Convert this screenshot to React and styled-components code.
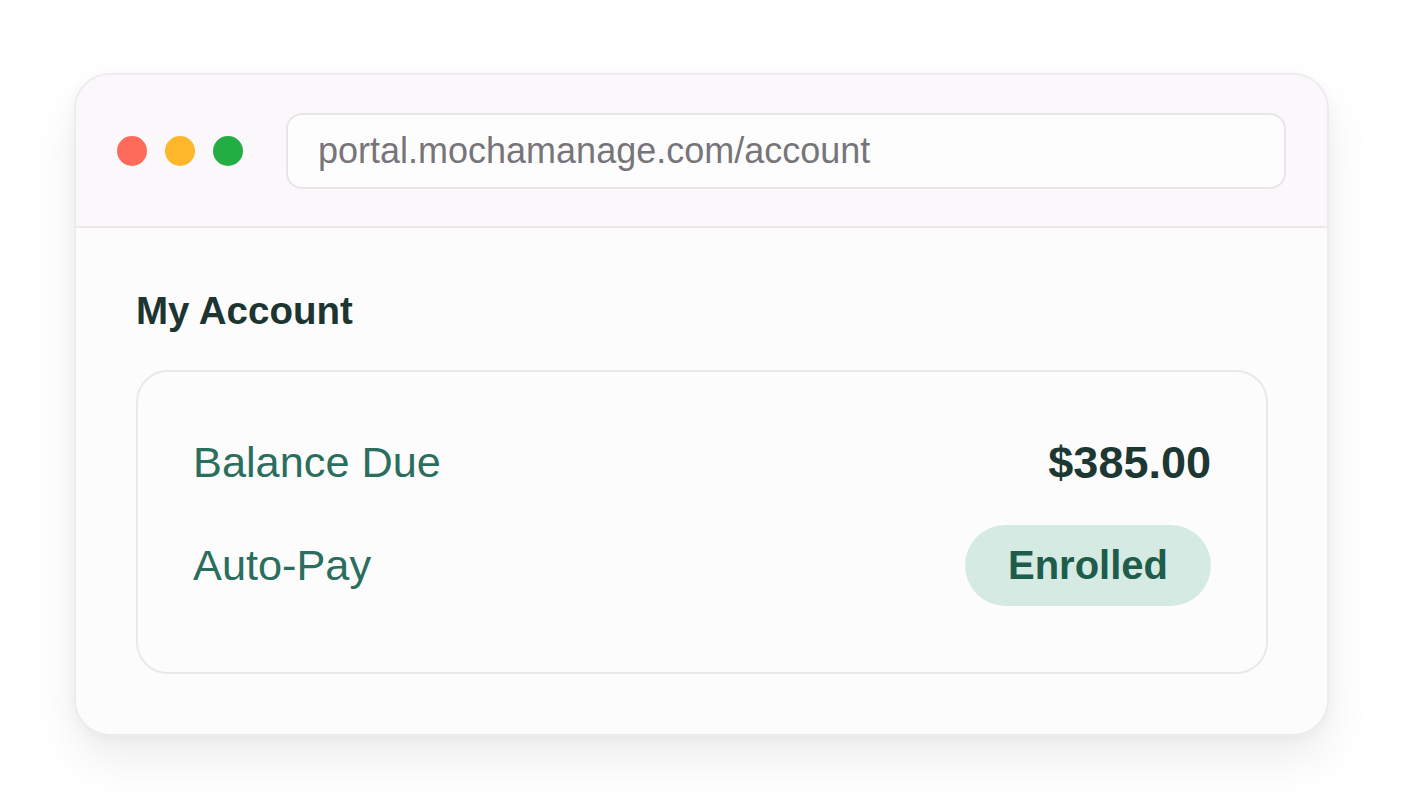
import React from "react";
import styled, { createGlobalStyle } from "styled-components";

const GlobalStyle = createGlobalStyle`
  html, body { margin: 0; padding: 0; background: #ffffff; }
  body { font-family: "Liberation Sans", Arial, sans-serif; }
`;

const Page = styled.div`
  width: 1404px;
  height: 810px;
  box-sizing: border-box;
  padding: 73px 75px 0 74px;
  background: #ffffff;
`;

const Window = styled.div`
  width: 1255px;
  height: 663px;
  box-sizing: border-box;
  border: 2px solid #eeebee;
  border-radius: 36px;
  background: #fdfcfd;
  overflow: hidden;
  display: flex;
  flex-direction: column;
  box-shadow: 0 24px 48px rgba(0, 0, 0, 0.07), 0 4px 14px rgba(0, 0, 0, 0.04);
`;

const TitleBar = styled.div`
  height: 153px;
  box-sizing: border-box;
  flex-shrink: 0;
  display: flex;
  align-items: center;
  padding: 0 41px;
  background: #faf8fa;
  border-bottom: 2px solid #ebe7eb;
`;

const Dots = styled.div`
  display: flex;
  gap: 18px;
  margin-right: 43px;
`;

const Dot = styled.span`
  width: 30px;
  height: 30px;
  border-radius: 50%;
  background: ${(p) => p.$color};
`;

const AddressBar = styled.div`
  flex: 1;
  height: 76px;
  box-sizing: border-box;
  display: flex;
  align-items: center;
  padding: 0 30px;
  border: 2px solid #e8e4e8;
  border-radius: 16px;
  background: #fefdfe;
  color: #777579;
  font-size: 36px;
`;

const Body = styled.div`
  flex: 1;
  display: flex;
  flex-direction: column;
  padding: 60px 59px 0 60px;
`;

const Title = styled.h1`
  margin: 0 0 36px;
  font-size: 38.5px;
  line-height: 46px;
  font-weight: 700;
  color: #1d3531;
`;

const Card = styled.div`
  height: 304px;
  box-sizing: border-box;
  border: 2px solid #ebe7eb;
  border-radius: 32px;
  padding: 50px 55px 0;
  display: flex;
  flex-direction: column;
  gap: 22px;
`;

const Row = styled.div`
  display: flex;
  align-items: center;
  justify-content: space-between;
  min-height: 81px;
`;

const Label = styled.span`
  font-size: 43.3px;
  color: #2a6e5e;
`;

const Amount = styled.span`
  font-size: 45px;
  font-weight: 700;
  color: #1d3733;
`;

const Badge = styled.span`
  height: 81px;
  box-sizing: border-box;
  display: inline-flex;
  align-items: center;
  padding: 0 43px;
  border-radius: 41px;
  background: #d5eae2;
  color: #1e5d4b;
  font-size: 40px;
  font-weight: 700;
`;

export default function App() {
  return (
    <>
      <GlobalStyle />
      <Page>
        <Window>
          <TitleBar>
            <Dots>
              <Dot $color="#ff6b5b" />
              <Dot $color="#ffb72a" />
              <Dot $color="#22ae42" />
            </Dots>
            <AddressBar>portal.mochamanage.com/account</AddressBar>
          </TitleBar>
          <Body>
            <Title>My Account</Title>
            <Card>
              <Row>
                <Label>Balance Due</Label>
                <Amount>$385.00</Amount>
              </Row>
              <Row>
                <Label>Auto-Pay</Label>
                <Badge>Enrolled</Badge>
              </Row>
            </Card>
          </Body>
        </Window>
      </Page>
    </>
  );
}
